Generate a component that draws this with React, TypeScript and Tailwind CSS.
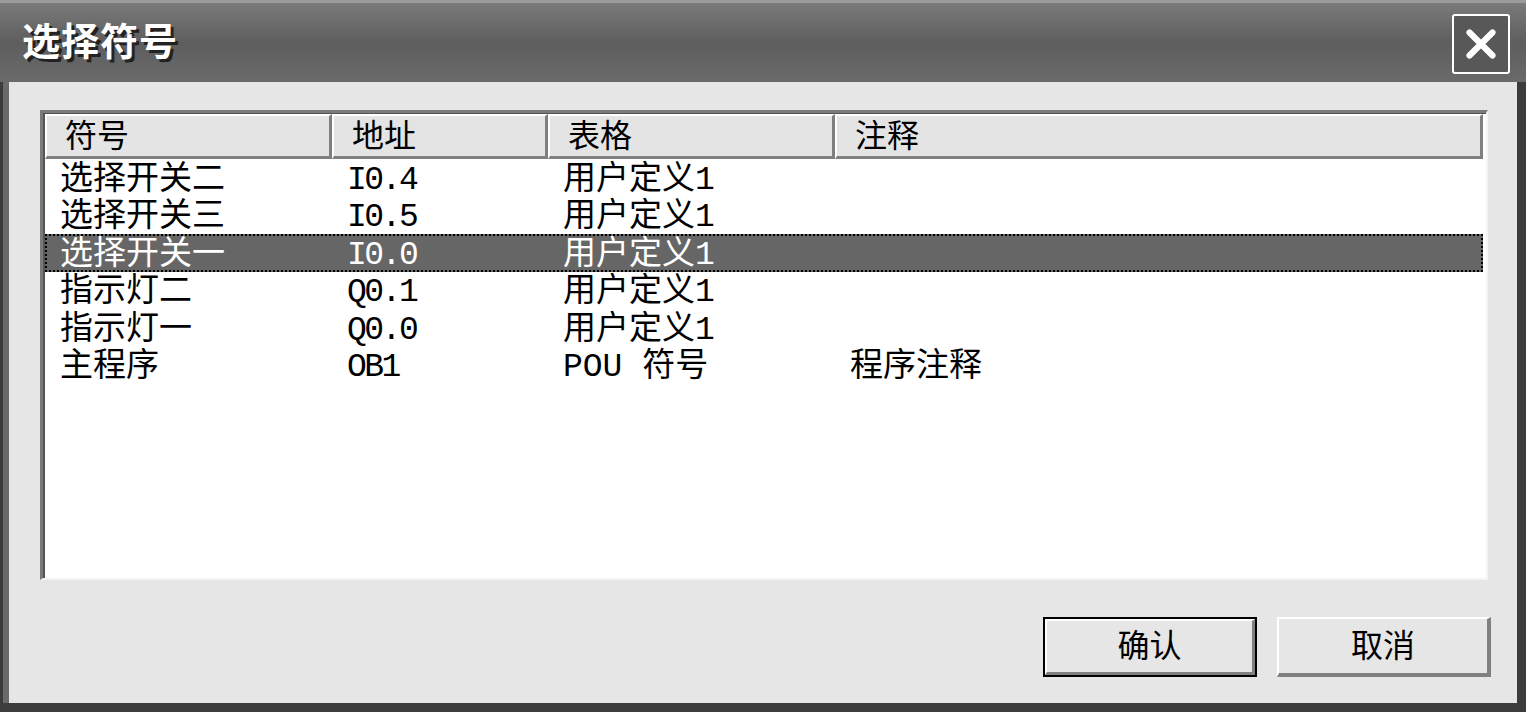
import { X } from "lucide-react";

type Row = {
    symbol: string;
    address: string;
    table: string;
    comment: string;
};

const rows: Row[] = [
    { symbol: "选择开关二", address: "I0.4", table: "用户定义1", comment: "" },
    { symbol: "选择开关三", address: "I0.5", table: "用户定义1", comment: "" },
    { symbol: "选择开关一", address: "I0.0", table: "用户定义1", comment: "" },
    { symbol: "指示灯二", address: "Q0.1", table: "用户定义1", comment: "" },
    { symbol: "指示灯一", address: "Q0.0", table: "用户定义1", comment: "" },
    { symbol: "主程序", address: "OB1", table: "POU 符号", comment: "程序注释" },
];

const cols = [
    { label: "符号", width: "w-[287px]" },
    { label: "地址", width: "w-[216px]" },
    { label: "表格", width: "w-[287px]" },
    { label: "注释", width: "flex-1" },
];

// Liberation Mono first keeps the line boxes tight, CJK falls back to Noto
const font = "font-['Liberation_Mono','Noto_Sans_CJK_SC',monospace]";

export default function App() {
    const selected = 2;
    return (
        <div className={`w-[1526px] h-[712px] bg-[#3c3c3c] flex flex-col ${font} overflow-hidden`}>
            {/* title bar */}
            <div className="h-[82px] shrink-0 bg-gradient-to-b from-[#7a7a7a] via-[#5e5e5e] to-[#6a6a6a] flex items-center justify-between pl-[22px] pr-[16px] border-t-[3px] border-[#9a9a9a]">
                <span className="text-white text-[38px] font-bold tracking-[1px] pt-[4px] [text-shadow:3px_3px_0_#222]">
                    选择符号
                </span>
                <div className="w-[58px] h-[60px] rounded-[3px] border-[2px] border-white bg-[#585858] flex items-center justify-center mt-[2px]">
                    <X className="w-[46px] h-[46px] text-white" strokeWidth={3.2} />
                </div>
            </div>

            {/* body */}
            <div className="flex-1 flex pl-[3px] pb-[9px] bg-[#3c3c3c]">
                <div className="w-[6px] bg-[#6a6a6a]" />
                <div className="flex-1 bg-[#e6e6e6] flex flex-col pl-[31px] pr-[29px] pt-[28px]">
                    {/* list */}
                    <div className="h-[470px] bg-white border-l-[3px] border-t-[3px] border-r-[2px] border-b-[2px] border-l-[#7a7a7a] border-t-[#7a7a7a] border-r-[#f5f5f5] border-b-[#f5f5f5] flex flex-col">
                        <div className="border-l-[2px] border-t-[1px] border-[#555] flex-1 flex flex-col pr-[3px]">
                            <div className="h-[45px] flex shrink-0">
                                {cols.map((c) => (
                                    <div
                                        key={c.label}
                                        className={`${c.width} bg-[#e4e4e4] border-t-[2px] border-l-[2px] border-white border-r-[3px] border-b-[3px] border-r-[#808080] border-b-[#808080] pl-[18px] pt-[5px] flex items-center text-[32px] leading-none text-black`}
                                    >
                                        {c.label}
                                    </div>
                                ))}
                            </div>
                            {rows.map((r, i) => {
                                const sel = i === selected;
                                return (
                                    <div
                                        key={r.symbol}
                                        className={`h-[37.5px] flex items-center pt-[5px] text-[33px] leading-none ${
                                            sel
                                                ? "bg-[#666] text-white border-[2px] border-dotted border-black"
                                                : "text-black border-[2px] border-transparent"
                                        }`}
                                    >
                                        <div className="w-[285px] pl-[13px] whitespace-nowrap">{r.symbol}</div>
                                        <div className="w-[216px] pl-[15px] whitespace-nowrap tracking-[-2.5px]">{r.address}</div>
                                        <div className="w-[287px] pl-[15px] whitespace-nowrap">{r.table}</div>
                                        <div className="flex-1 pl-[15px] whitespace-nowrap">{r.comment}</div>
                                    </div>
                                );
                            })}
                        </div>
                    </div>

                    {/* buttons */}
                    <div className="flex justify-end gap-[20px] mt-[37px] mr-[-3px]">
                        <button className="w-[214px] h-[60px] border-[2px] border-black bg-[#e6e6e6] text-[32px] text-black">
                            <div className="w-full h-full border-t-[2px] border-l-[2px] border-white border-r-[3px] border-b-[3px] border-r-[#808080] border-b-[#808080] pt-[5px] flex items-center justify-center">
                                确认
                            </div>
                        </button>
                        <button className="w-[214px] h-[60px] bg-[#e6e6e6] text-[32px] text-black border-t-[2px] border-l-[2px] border-white border-r-[4px] border-b-[4px] border-r-[#808080] border-b-[#808080] pt-[5px] flex items-center justify-center">
                            取消
                        </button>
                    </div>
                </div>
                <div className="w-[9px] bg-[#3c3c3c]" />
            </div>
        </div>
    );
}
